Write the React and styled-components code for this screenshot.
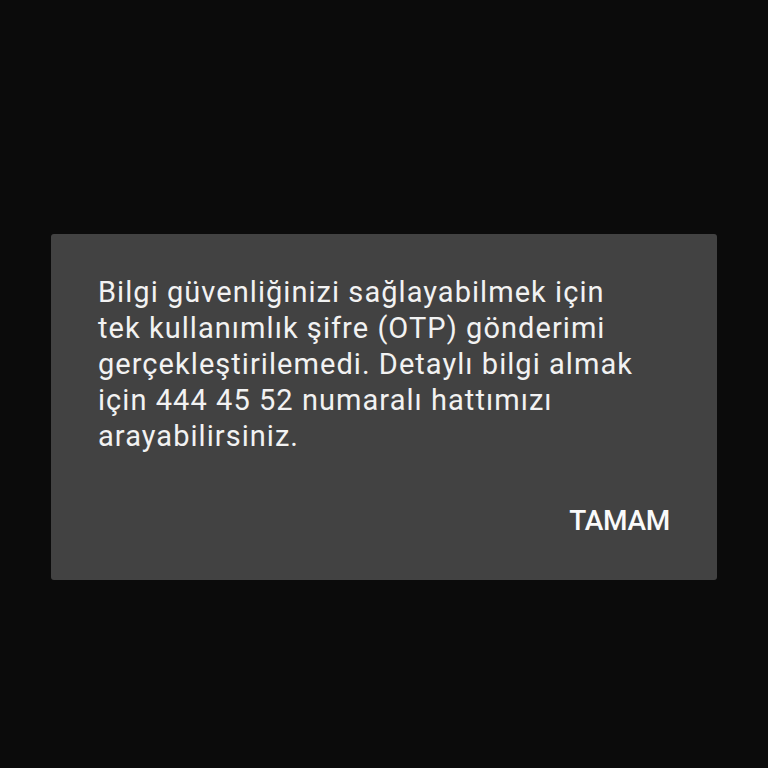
import styled, { createGlobalStyle } from 'styled-components'

const Global = createGlobalStyle`
    html, body {
        margin: 0;
        padding: 0;
        background: #0b0b0b;
    }
    * {
        box-sizing: border-box;
    }
`

const Screen = styled.main`
    width: 768px;
    height: 768px;
    padding: 234px 51px 0;
    font-family: Roboto, 'Noto Sans', sans-serif;
`

const Dialog = styled.section`
    width: 666px;
    height: 346px;
    background: #424242;
    border-radius: 3px;
    padding: 40px 47px 0;
    display: flex;
    flex-direction: column;
`

const Message = styled.p`
    margin: 0;
    font-size: 29px;
    line-height: 36px;
    color: #f2f2f2;
    letter-spacing: 1.05px;
    white-space: nowrap;
`

const Actions = styled.div`
    display: flex;
    justify-content: flex-end;
    margin-top: 51px;
`

const TextButton = styled.button`
    background: none;
    border: 0;
    padding: 0;
    font-family: inherit;
    font-size: 28px;
    font-weight: 500;
    letter-spacing: -0.3px;
    line-height: 32px;
    color: #fafafa;
    cursor: pointer;
`

export default function App() {
    return <Screen>
        <Global />
        <Dialog>
            <Message>
                Bilgi güvenliğinizi sağlayabilmek için<br />
                tek kullanımlık şifre (OTP) gönderimi<br />
                gerçekleştirilemedi. Detaylı bilgi almak<br />
                için 444 45 52 numaralı hattımızı<br />
                arayabilirsiniz.
            </Message>
            <Actions>
                <TextButton>TAMAM</TextButton>
            </Actions>
        </Dialog>
    </Screen>
}
